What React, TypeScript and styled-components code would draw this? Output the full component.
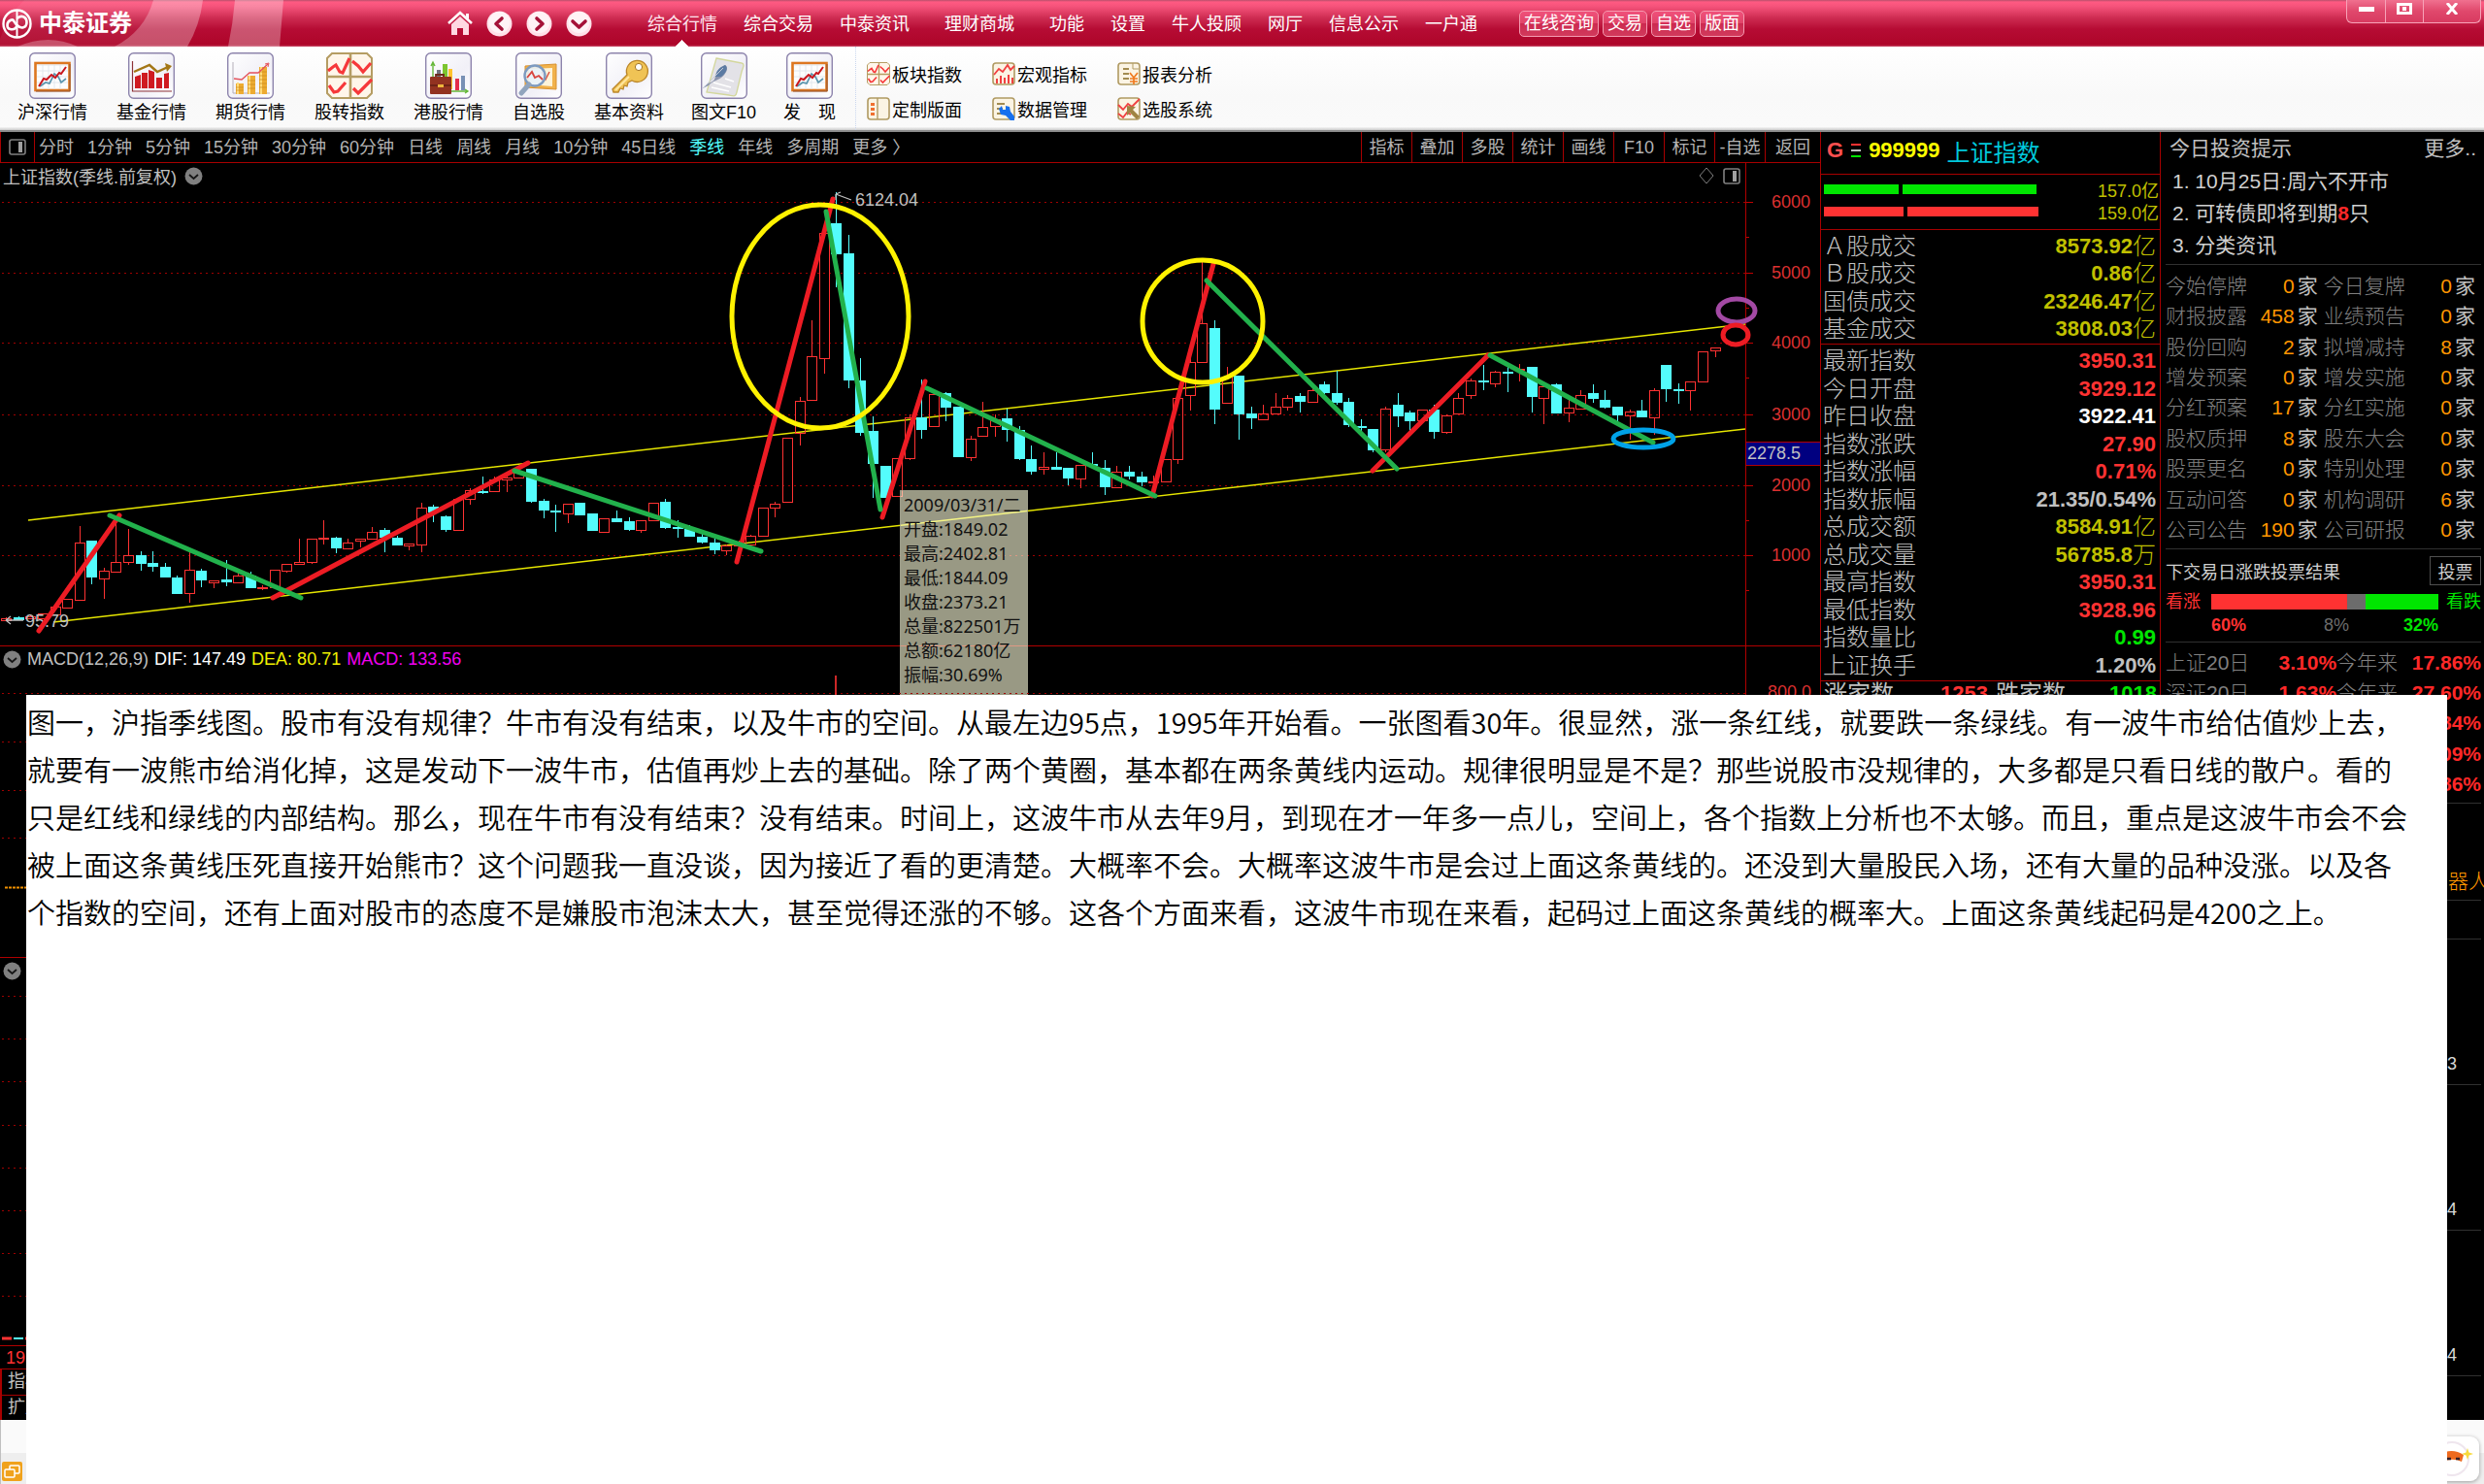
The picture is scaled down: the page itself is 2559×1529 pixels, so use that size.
import React from "react";
import styled, { createGlobalStyle, css } from "styled-components";

const SANS = '"Liberation Sans", "Noto Sans CJK SC", sans-serif';
const RED_LINE = "#a80000";

const GlobalStyle = createGlobalStyle`
  * { box-sizing: border-box; }
  body { margin: 0; background: #fff; font-family: ${SANS}; font-size: 18px; overflow-x: hidden; }
  button, a { font: inherit; color: inherit; text-decoration: none; }
  button { padding: 0; border: 0; background: none; white-space: nowrap; }
  svg { display: block; flex: none; }
`;

/* ---------- page frame ---------- */

const Page = styled.div`
  position: relative;
  display: flex;
  flex-direction: column;
  min-height: 100vh;
  overflow: hidden;
`;

const TitleBar = styled.header`
  position: relative;
  display: flex;
  height: 48px;
  padding-right: 3px;
  color: #fff;
  background: linear-gradient(#b8506c 0, #ff5a82 2px, #f4527a 7px, #cc2a50 19px, #b60c34 30px, #ae0529 46px, #c94b68 48px);
`;

const Swoosh = styled.svg`
  position: absolute;
  left: 0;
  top: 0;
`;

const Brand = styled.div`
  position: relative;
  display: flex;
  align-items: center;
  gap: 7px;
  width: 461px;
  padding-left: 2px;
  font-size: 24px;
  font-weight: 700;
  line-height: 46px;
`;

const NavButtons = styled.div`
  display: flex;
  align-items: center;
  gap: 14px;
  width: 206px;
`;

const IconButton = styled.button`
  display: flex;
`;

const MainNav = styled.nav`
  display: flex;
  gap: 27px;
  line-height: 50px;
`;

const NavLink = styled.a<{ $active?: boolean; $roomy?: boolean }>`
  white-space: nowrap;
  margin-right: ${(p) => (p.$roomy ? "9px" : "0")};
  ${(p) =>
    p.$active &&
    css`
      color: #ffe4ee;
      background: conic-gradient(from 135deg at 50% 0, #fff 90deg, transparent 0) center 41px / 14px 7px no-repeat;
    `}
`;

const QuickLinks = styled.div`
  display: flex;
  flex: 1;
  align-items: center;
  gap: 4px;
  padding-left: 43px;
`;

const QuickButton = styled.button`
  height: 27px;
  padding: 0 4px;
  border: 1px solid #f59ab0;
  border-radius: 5px;
  line-height: 25px;
  background: linear-gradient(#f0507a, #e04468 50%, #cc2a50 50%, #d23a5c);
`;

const WindowControls = styled.div`
  display: flex;
  height: 24px;
  border: 1px solid #f7a3b8;
  border-top: 0;
  border-radius: 0 0 6px 6px;
  background: linear-gradient(#f0708f, #e0486c 50%, #d83a60);
`;

const WindowButton = styled.button<{ $wide?: boolean }>`
  display: flex;
  align-items: center;
  justify-content: center;
  width: ${(p) => (p.$wide ? "59px" : "39px")};
  padding-bottom: 5px;
  & + & { border-left: 1px solid #f7a3b8; }
`;

const ToolBar = styled.div`
  display: flex;
  height: 88px;
  padding-left: 3px;
  border-bottom: 2px solid #8c8c8c;
  background: linear-gradient(#fff, #f9f9f9 60%, #fafafa 96%, #ccc);
`;

const Tool = styled.button`
  display: flex;
  flex-direction: column;
  align-items: center;
  gap: 4px;
  padding: 6px 15px 0;
  line-height: 20px;
  color: #000;
  &:nth-child(8) { padding: 6px 13px 0; }
`;

const SmallTools = styled.div`
  display: grid;
  grid-template-columns: repeat(3, 129px);
  grid-auto-rows: 36px;
  margin-left: 5px;
  padding: 10px 0 0 11px;
  border-left: 1px dotted #c9d6ee;
`;

const SmallTool = styled.button`
  display: flex;
  align-items: center;
  gap: 2px;
  color: #000;
`;

const Workspace = styled.main`
  display: grid;
  flex: 1;
  grid-template-columns: minmax(0, 1fr) 351px 333px;
  color: #c0c0c0;
  background: #000;
`;

/* ---------- chart column ---------- */

const ChartColumn = styled.section`
  display: flex;
  flex-direction: column;
  min-width: 0;
`;

const PeriodBar = styled.div`
  display: flex;
  height: 32px;
  border-bottom: 1px solid ${RED_LINE};
  line-height: 32px;
`;

const PanelToggle = styled.button`
  display: flex;
  align-items: center;
  justify-content: center;
  width: 36px;
  border: solid ${RED_LINE};
  border-width: 0 1px;
`;

const Periods = styled.div`
  display: flex;
  flex: 1;
  gap: 14px;
  padding-left: 4px;
`;

const Period = styled.button<{ $active?: boolean }>`
  color: ${(p) => (p.$active ? "#54fcfc" : "#b4b4b4")};
`;

const ChartAction = styled.button`
  width: 52px;
  border-left: 1px solid ${RED_LINE};
  color: #b4b4b4;
  &:last-child { width: 57px; }
`;

const Pane = styled.div`
  position: relative;
  display: grid;
  > * { grid-area: 1 / 1; }
`;

const PaneTitle = styled.div<{ $gap?: number }>`
  z-index: 1;
  display: flex;
  align-items: center;
  align-self: start;
  gap: ${(p) => p.$gap ?? 8}px;
  height: 26px;
  padding: 0 82px 0 3px;
`;

const Value = styled.span<{ $color: string }>`
  color: ${(p) => p.$color};
`;

const Spacer = styled.span`
  flex: 1;
`;

const ChartSvg = styled.svg`
  width: 100%;
  height: auto;
  font-family: ${SANS};
  font-size: 18px;
`;

const Tooltip = styled.div`
  position: absolute;
  left: 927px;
  top: 337px;
  width: 132px;
  height: 230px;
  padding: 2px 3px;
  border: 1px solid rgba(160, 160, 140, 0.6);
  font-family: "Noto Sans", "Noto Sans CJK SC", sans-serif;
  line-height: 25px;
  color: #111;
  background: rgba(255, 255, 220, 0.6);
  white-space: nowrap;
`;

const TabRow = styled.div`
  flex: 1;
  min-height: 26px;
  padding-left: 6px;
  border: 1px solid ${RED_LINE};
  border-width: 1px 0 0 2px;
  line-height: 25px;
`;

/* ---------- quote column ---------- */

const QuoteColumn = styled.section`
  border: solid ${RED_LINE};
  border-width: 0 1px;
`;

const QuoteHead = styled.div`
  display: flex;
  align-items: center;
  gap: 7px;
  height: 44px;
  padding: 0 6px 5px;
  border-bottom: 1px solid ${RED_LINE};
  font-size: 24px;
  color: #00c8dc;
`;

const Code = styled.strong<{ $color: string }>`
  font-size: 22px;
  color: ${(p) => p.$color};
`;

const Depth = styled.div`
  display: grid;
  grid-template-columns: 224px 1fr;
  grid-auto-rows: 23px;
  align-items: center;
  height: 57px;
  padding: 3px 1px 0 3px;
  border-bottom: 1px solid ${RED_LINE};
  text-align: right;
  color: #c0c000;
`;

const DepthBar = styled.div<{ $color: string }>`
  display: flex;
  gap: 4px;
  height: 10px;
  i { background: ${(p) => p.$color}; }
`;

const Stats = styled.dl<{ $height: number }>`
  display: grid;
  grid-auto-rows: 1fr;
  height: ${(p) => p.$height}px;
  margin: 0;
  padding: 3px 4px 1px 2px;
  border-bottom: 1px solid ${RED_LINE};
`;

const Stat = styled.div`
  display: flex;
  align-items: center;
  justify-content: space-between;
  min-height: 0;
  font-size: 24px;
  line-height: 28px;
`;

const StatLabel = styled.dt`
  font-weight: 300;
`;

const StatValue = styled.dd<{ $color: string }>`
  display: flex;
  margin: 0;
  font-size: 22px;
  font-weight: 700;
  color: ${(p) => p.$color};
  small { font-size: 24px; font-weight: 300; }
`;

const Counts = styled.div`
  display: grid;
  grid-template-columns: 72px 97px 8px 72px 1fr;
  height: 30px;
  padding: 0 3px;
  font-size: 24px;
  line-height: 26px;
  b { font-size: 22px; text-align: right; }
  span:nth-child(3) { grid-column: 4; }
`;

/* ---------- information column ---------- */

const InfoColumn = styled.aside`
  display: flex;
  flex-direction: column;
  padding: 0 3px 0 5px;
  overflow: hidden;
  font-size: 21px;
`;

const InfoHead = styled.div`
  display: flex;
  justify-content: space-between;
  padding: 0 5px 0 4px;
  line-height: 34px;
`;

const Tips = styled.ol`
  height: 102px;
  margin: 0;
  padding: 0 0 0 7px;
  list-style: none;
  line-height: 33px;
  color: #d0d0d0;
`;

const Alert = styled.b`
  color: #ff2828;
`;

const EventTable = styled.table`
  height: 294px;
  border: solid #303030;
  border-width: 1px 0;
  border-spacing: 0;
  padding: 6px 0 3px;
  td, th { padding: 0; font-weight: 400; line-height: 26px; white-space: nowrap; }
  th { width: 85px; text-align: left; color: #808080; font-weight: 300; }
  td { width: 78px; padding-right: 6px; text-align: right; }
`;

const Num = styled.span`
  margin-right: 3px;
  color: #ff9600;
`;

const VoteHead = styled.div`
  display: flex;
  align-items: center;
  justify-content: space-between;
  height: 43px;
  font-size: 18px;
  color: #d0d0d0;
`;

const VoteButton = styled.button`
  width: 53px;
  height: 30px;
  border: 1px solid #505050;
`;

const VoteBar = styled.div`
  display: grid;
  grid-template-columns: 47px 60fr 8fr 32fr 44px;
  height: 52px;
  grid-template-rows: 22px 26px;
  align-items: center;
  font-size: 18px;
  line-height: 22px;
`;

const VoteText = styled.span<{ $color: string; $end?: boolean }>`
  text-align: ${(p) => (p.$end ? "right" : "left")};
  color: ${(p) => p.$color};
`;

const VoteShares = styled.div`
  display: flex;
  grid-row: 2;
  grid-column: 2 / 5;
  justify-content: space-between;
  b:nth-child(2) { margin-left: 24px; font-weight: 400; }
`;

const VoteFill = styled.i<{ $color: string }>`
  height: 16px;
  background: ${(p) => p.$color};
`;

const YearTable = styled.table`
  height: 167px;
  border: solid #303030;
  border-width: 1px 0;
  border-spacing: 0;
  padding: 5px 0 3px;
  td, th { padding: 0; line-height: 26px; white-space: nowrap; }
  th { text-align: left; color: #808080; font-weight: 300; }
  td { text-align: right; color: #ff2828; font-weight: 700; }
  td:nth-child(2) { width: 90px; }
  td:last-child { width: 86px; }
`;

const Topic = styled.div`
  height: 100px;
  padding: 64px 0 0 291px;
  border-bottom: 1px solid #303030;
  font-weight: 300;
  line-height: 32px;
  white-space: nowrap;
  color: #ff9600;
`;

const Gap = styled.div`
  height: 40px;
  border-bottom: 1px solid #303030;
`;

const NewsItem = styled.div`
  height: 150px;
  padding: 116px 25px 0 0;
  border-bottom: 1px solid #303030;
  font-size: 18px;
  line-height: 24px;
  text-align: right;
  color: #d8d8d8;
`;

/* ---------- bottom and note ---------- */

const StatusBar = styled.footer`
  display: flex;
  justify-content: space-between;
  align-items: flex-end;
  height: 66px;
  padding: 0 5px 3px 1px;
  border-left: 1px solid #c0c0c0;
  background: linear-gradient(#fafafa 34px, #eee 34px);
`;

const Assistant = styled.button`
  display: flex;
  align-items: center;
  justify-content: center;
  width: 64px;
  height: 46px;
  padding-left: 10px;
  border-radius: 9px;
  background: #fff;
  box-shadow: 0 1px 4px rgba(0, 0, 0, 0.35);
`;

const Note = styled.article`
  position: absolute;
  inset: 716px 38px 0 27px;
  padding: 3px 0 0 1px;
  font-family: "Noto Sans CJK SC", sans-serif;
  font-size: 29px;
  font-weight: 350;
  line-height: 49px;
  color: #000;
  background: #fff;
  white-space: nowrap;
`;

const NoteLine = styled.div``;

/* ---------- data ---------- */

type Candle = [up: 0 | 1, high: number, top: number, bottom: number, low: number];

// Depth below the top of the price scale, 1039 units for 5000 points.
const candles: Candle[] = [
  [1,1300,1302,1308,1308],[0,1296,1301,1306,1306],[1,1294,1297,1303,1303],[1,1288,1289,1302,1302],[1,1262,1269,1290,1290],
  [1,1247,1247,1270,1270],[1,1031,1080,1248,1248],[0,1074,1074,1180,1202],[1,1155,1164,1187,1246],[1,1010,1136,1167,1167],
  [1,1040,1118,1136,1145],[0,1107,1118,1141,1163],[0,1107,1139,1150,1167],[0,1139,1151,1181,1181],[0,1176,1182,1228,1228],
  [1,1110,1161,1230,1257],[0,1158,1164,1189,1212],[1,1191,1191,1196,1214],[0,1133,1190,1193,1210],[1,1170,1178,1196,1196],
  [0,1165,1178,1211,1211],[1,1205,1212,1213,1220],[1,1161,1161,1212,1212],[1,1144,1144,1162,1168],[1,1070,1137,1144,1144],
  [1,1070,1070,1136,1142],[1,1015,1067,1069,1086],[0,1062,1066,1095,1113],[1,1070,1080,1098,1098],[1,1068,1068,1076,1095],
  [1,1035,1050,1068,1068],[0,1038,1044,1064,1109],[0,1060,1065,1086,1090],[1,1083,1083,1089,1103],[1,964,977,1085,1109],
  [0,970,976,990,1020],[0,1000,1003,1040,1050],[1,951,951,1042,1042],[1,920,926,951,970],[0,886,930,933,938],
  [1,886,895,930,930],[1,885,889,896,933],[1,872,875,888,893],[0,865,865,958,964],[0,953,958,984,1010],
  [0,970,987,990,1048],[1,967,967,994,1022],[0,964,964,997,997],[0,996,996,1043,1043],[1,1010,1010,1048,1052],
  [0,985,1010,1018,1018],[0,1005,1018,1040,1045],[1,1016,1016,1042,1052],[1,963,963,1016,1016],[0,953,962,1035,1040],
  [0,1015,1036,1039,1065],[0,1028,1040,1060,1060],[0,1056,1062,1078,1082],[0,1070,1080,1100,1116],[1,1085,1090,1102,1117],
  [1,1075,1080,1090,1090],[1,1058,1060,1085,1085],[1,977,977,1060,1060],[1,960,965,977,1005],[1,772,772,962,962],
  [1,652,664,758,795],[1,428,532,661,661],[1,165,172,538,585],[0,52,142,230,330],[0,176,232,602,628],
  [0,540,604,755,766],[0,710,753,847,950],[0,856,856,945,945],[1,832,832,944,944],[1,704,712,832,838],
  [0,602,712,748,774],[1,640,645,738,738],[0,638,642,680,724],[0,680,680,826,830],[1,768,776,829,842],
  [1,668,741,768,768],[1,705,717,738,770],[0,688,716,748,783],[0,738,750,833,838],[0,795,835,869,881],
  [1,814,857,865,881],[0,816,858,863,868],[0,860,860,888,911],[1,852,853,891,920],[0,816,850,852,857],
  [0,838,860,915,942],[1,855,872,919,919],[0,856,873,885,895],[0,872,886,902,915],[1,885,902,905,920],
  [1,836,836,902,902],[1,650,657,836,850],[1,540,549,648,692],[1,252,437,550,550],[0,428,449,688,732],
  [1,565,592,670,670],[0,590,591,700,778],[0,680,702,714,748],[1,676,702,717,717],[1,642,682,700,705],
  [1,646,657,682,692],[0,642,651,663,697],[1,628,632,666,670],[0,607,617,638,645],[0,575,640,666,676],
  [0,655,668,732,740],[0,718,737,740,753],[0,748,748,808,816],[1,682,686,806,815],[0,642,677,706,740],
  [0,692,697,722,752],[1,691,691,720,720],[0,675,690,753,774],[1,703,708,756,762],[1,640,657,702,702],
  [1,600,605,648,658],[0,560,604,607,633],[1,575,580,612,623],[0,563,579,582,638],[1,556,570,573,607],
  [0,564,564,650,697],[1,615,622,657,732],[0,612,617,697,697],[1,660,685,698,727],[1,634,647,687,687],
  [0,617,641,657,670],[0,634,660,680,688],[0,680,682,704,730],[1,690,695,708,778],[0,662,694,710,714],
  [1,628,634,713,765],[0,560,560,628,668],[0,612,630,632,672],[1,608,608,632,693],[1,518,520,608,608],[1,507,507,516,535],
];

const depthToY = (d: number) => Math.round(180 + d * 0.3508);
const barX = (i: number) => Math.round(6.3 + i * 12.573);

const redStrokes = [[40,650,123,531],[281,616,544,477],[759,579,858,205],[909,533,953,393],[1187,511,1250,272],[1414,485,1533,366]];
const greenStrokes = [[113,531,310,616],[530,485,784,568],[851,218,907,525],[955,400,1190,511],[1243,289,1439,483],[1535,366,1703,456]];
const priceGrid: [number, string][] = [[208,"6000"],[281,"5000"],[353,"4000"],[427,"3000"],[500,"2000"],[572,"1000"]];

const periods = ["分时","1分钟","5分钟","15分钟","30分钟","60分钟","日线","周线","月线","10分钟","45日线","季线","年线","多周期","更多 〉"];
const actions = ["指标","叠加","多股","统计","画线","F10","标记","-自选","返回"];
const navItems = ["综合行情","综合交易","中泰资讯","理财商城","功能","设置","牛人投顾","网厅","信息公示","一户通"];

const Y = "#c0c000", R = "#ff3232", W = "#ffffff", G = "#00e600", S = "#c0c0c0";
const turnover: [string, string, string, string][] = [
  ["Ａ股成交","8573.92","亿",Y],["Ｂ股成交","0.86","亿",Y],["国债成交","23246.47","亿",Y],["基金成交","3808.03","亿",Y],
];
const quote: [string, string, string, string][] = [
  ["最新指数","3950.31","",R],["今日开盘","3929.12","",R],["昨日收盘","3922.41","",W],["指数涨跌","27.90","",R],
  ["指数涨幅","0.71%","",R],["指数振幅","21.35/0.54%","",S],["总成交额","8584.91","亿",Y],["总成交量","56785.8","万",Y],
  ["最高指数","3950.31","",R],["最低指数","3928.96","",R],["指数量比","0.99","",G],["上证换手","1.20%","",S],
];
const events: [string, number, string, number][] = [
  ["今始停牌",0,"今日复牌",0],["财报披露",458,"业绩预告",0],["股份回购",2,"拟增减持",8],["增发预案",0,"增发实施",0],
  ["分红预案",17,"分红实施",0],["股权质押",8,"股东大会",0],["股票更名",0,"特别处理",0],["互动问答",0,"机构调研",6],["公司公告",190,"公司研报",0],
];
const noteLines = [
  "图一，沪指季线图。股市有没有规律？牛市有没有结束，以及牛市的空间。从最左边95点，1995年开始看。一张图看30年。很显然，涨一条红线，就要跌一条绿线。有一波牛市给估值炒上去，",
  "就要有一波熊市给消化掉，这是发动下一波牛市，估值再炒上去的基础。除了两个黄圈，基本都在两条黄线内运动。规律很明显是不是？那些说股市没规律的，大多都是只看日线的散户。看的",
  "只是红线和绿线的内部结构。那么，现在牛市有没有结束？没有结束。时间上，这波牛市从去年9月，到现在才一年多一点儿，空间上，各个指数上分析也不太够。而且，重点是这波牛市会不会",
  "被上面这条黄线压死直接开始熊市？这个问题我一直没谈，因为接近了看的更清楚。大概率不会。大概率这波牛市是会过上面这条黄线的。还没到大量股民入场，还有大量的品种没涨。以及各",
  "个指数的空间，还有上面对股市的态度不是嫌股市泡沫太大，甚至觉得还涨的不够。这各个方面来看，这波牛市现在来看，起码过上面这条黄线的概率大。上面这条黄线起码是4200之上。",
];

/* ---------- icons ---------- */

const Frame = ({ children }: { children: React.ReactNode }) => (
  <svg width="48" height="48" viewBox="0 0 48 48" fill="none">
    <defs>
      <linearGradient id="tile" x1="0" y1="0" x2="1" y2="1">
        <stop offset="0" stopColor="#fff" />
        <stop offset="0.6" stopColor="#f1f0f7" />
        <stop offset="1" stopColor="#fff" />
      </linearGradient>
    </defs>
    <rect x="0.7" y="0.7" width="46.6" height="46.6" rx="5" fill="url(#tile)" stroke="#8d84ac" strokeWidth="1.4" />
    {children}
  </svg>
);

const BoardIcon = () => (
  <Frame>
    <rect x="6.5" y="11" width="35" height="28" fill="#fdfdfd" stroke="#dd7720" strokeWidth="2.6" />
    <path d="M8 13h32M14 13v25M20 13v25M26 13v25M32 13v25M8 19h32M8 25h32M8 31h32" stroke="#dde3ea" strokeWidth="0.8" />
    <path d="M11 35l6-4 4 1 5-10 4 3 3 6 5-4" stroke="#5b95ad" strokeWidth="1.7" />
    <path d="M10 35l5-8 3 1 5-5 4 3 4-5 2 1 5-7" stroke="#c9161d" strokeWidth="2" />
    <path d="M7 40h35V12" stroke="#8d5332" />
  </Frame>
);

const FundIcon = () => (
  <Frame>
    <path d="M4.5 9v31H45" stroke="#8d3339" strokeWidth="1.2" />
    <path d="M7 25l6-2v14H7zM14 21h6v16h-6zM21 18l6 2v17h-6zM29 26h6v11h-6zM37 22l5-1v16h-5z" fill="#cf1a20" />
    <path d="M6 20l16-7 8 7 11-5" stroke="#a37616" strokeWidth="2.4" />
    <path d="M38 11l7 3-5 6z" fill="#a37616" />
  </Frame>
);

const FutureIcon = () => (
  <Frame>
    <path d="M6 10v32h38" stroke="#b4aeb9" />
    <path d="M9 32h8v11H9zM21 24h8v19h-8zM33 15h8v28h-8z" fill="#edab32" />
    <path d="M11 31v12M23 24v19M35 15v28" stroke="#ffdc7e" strokeWidth="2" />
    <path d="M9 36h8M9 39h8M21 29h8M21 33h8M21 37h8M33 20h8M33 24h8M33 28h8M33 32h8M33 36h8" stroke="#c98b1d" strokeWidth="0.7" />
    <path d="M7 27l8 1 8-7h9l10-9" stroke="#e4525c" strokeWidth="1.4" />
    <path d="M39 12l4-1-1 4" stroke="#e4525c" />
  </Frame>
);

const QuadArt = () => (
  <>
    <path d="M6 1h36l5 5v36l-5 5H6l-5-5V6z" fill="#fff6ea" stroke="#b59d63" strokeWidth="2" />
    <path d="M25 1v46M1 25h46" stroke="#b59d63" strokeWidth="2.6" />
    <path d="M2 19l5-4 3-2 4 7 3 1 7-15M27 9l6 5 5 6 8-9M3 34l5 7 4-1 8-9M28 37l5 5 6-6 8-8" stroke="#f6383a" strokeWidth="3.2" />
  </>
);
const QuadIcon = () => <svg width="48" height="48" viewBox="0 0 48 48" fill="none"><QuadArt /></svg>;

const HkIcon = () => (
  <Frame>
    <path d="M8 27V10m-2 4l2-4 2 4M20 40h24m-3-2l3 2-3 2" stroke="#66b83a" strokeWidth="1.4" />
    <path d="M12 18h4v8h-4z" fill="#71707c" /><path d="M18 12h5v14h-5z" fill="#7cc52f" /><path d="M24 17h4v21h-4z" fill="#ffc32c" />
    <path d="M31 27h4v12h-4z" fill="#e42c4b" /><path d="M37 24h4v15h-4z" fill="#7890b4" />
    <path d="M11 25v-2h8v2" stroke="#6e281b" strokeWidth="1.8" />
    <rect x="5" y="25" width="22" height="18" rx="1" fill="#923220" /><path d="M5 34h22" stroke="#5e1d13" strokeWidth="1.4" />
    <rect x="13" y="33" width="6" height="3" fill="#eeb63c" />
  </Frame>
);

const LensIcon = () => (
  <Frame>
    <path d="M10 14l32-2v26l-32-2z" fill="#f1b24b" stroke="#d9912e" />
    <path d="M14 17l24-1v19l-24-2z" fill="#fdf3d9" />
    <path d="M27 20l4 8 4-8" stroke="#da4c3c" strokeWidth="1.4" />
    <circle cx="20" cy="24" r="10.5" fill="#e7f1fa" fillOpacity="0.88" stroke="#7d9ac0" strokeWidth="2.4" />
    <path d="M12 26l5-6 3 6 4-2 4 4" stroke="#d8453e" strokeWidth="1.8" />
    <path d="M14 33l-8 9" stroke="#91a4bd" strokeWidth="5" strokeLinecap="round" />
  </Frame>
);

const KeyIcon = () => (
  <Frame>
    <path d="M22 23L7 38l1 3h5l2-4 3 1 1-4 3 1 1-4 4-2a11 11 0 1 0-5-6z" fill="#f0c355" stroke="#bb862a" strokeWidth="1.3" />
    <path d="M24 25L10 39" stroke="#ffe69e" strokeWidth="2" />
    <circle cx="34" cy="15" r="3.6" fill="#fff" stroke="#a47624" />
  </Frame>
);

const PaperIcon = () => (
  <Frame>
    <path d="M16 6l26 5c4 1 1 5 0 9l-5 21c-1 5-3 4-8 3L6 41z" fill="#e3e2e7" stroke="#d3d79c" strokeWidth="1.3" />
    <path d="M13 31l18 5M11 36l18 4M25 27l9 3" stroke="#fff" strokeWidth="1.4" />
    <path d="M2 37c4-6 9-5 12-9 2-5 2-11 11-15 5 3 0 10-4 13-4 3-8 3-13 8z" fill="#8c95ae" />
    <path d="M15 25c1-6 3-9 10-12 4 3 0 9-4 12z" fill="#5c7ba3" />
    <path d="M2 37L23 16" stroke="#c6ccd8" />
  </Frame>
);

const SmallSheet = ({ children }: { children: React.ReactNode }) => (
  <svg width="24" height="24" viewBox="0 0 24 24" fill="none">
    <rect x="1" y="1" width="22" height="22" rx="3" fill="#fbf4e4" stroke="#b09a62" strokeWidth="1.6" />
    {children}
  </svg>
);

const smallTools: [string, React.ReactNode][] = [
  ["板块指数", <svg key="q" width="24" height="24" viewBox="0 0 48 48" fill="none"><QuadArt /></svg>],
  ["宏观指标", <SmallSheet key="m"><path d="M2 13l5-6 4 3 5-7 3 5 4-4" stroke="#f04040" strokeWidth="1.8" /><path d="M5 22v-5M9 22v-8M13 22v-6M17 22v-9M21 22v-6" stroke="#f04040" strokeWidth="2" /></SmallSheet>],
  ["报表分析", <SmallSheet key="r"><path d="M6 7h6M6 12h6M6 17h6" stroke="#a28b50" strokeWidth="1.8" /><path d="M16 1v6h6" stroke="#b09a62" /><path d="M13 11l4 5 4-5M17 16v7M13 17h8M13 20h8" stroke="#f07a20" strokeWidth="1.7" /></SmallSheet>],
  ["定制版面", <SmallSheet key="c"><path d="M11 1v22" stroke="#b09a62" strokeWidth="1.4" /><path d="M4 6h4v3H4zM4 11h4v3H4zM4 16h4v3H4z" fill="#f07030" /></SmallSheet>],
  ["数据管理", <SmallSheet key="d"><path d="M5 7h8M5 12h6M5 17h4" stroke="#a28b50" strokeWidth="1.8" /><path d="M7 12l3-3 1 4 3 0 0-4 4 1 1 5 4 5v4h-4l-5-5-5-1z" fill="#1670ee" /></SmallSheet>],
  ["选股系统", <SmallSheet key="s"><path d="M1 8l5 5 5-6 4 3 8-8M1 17l5 4 4-5 4 2" stroke="#f04040" strokeWidth="1.8" /><path d="M10 9l9 1-3 3 7 7-3 3-7-7-3 3z" fill="#a08442" /></SmallSheet>],
];

const bigTools: [string, () => React.ReactElement][] = [
  ["沪深行情", BoardIcon],["基金行情", FundIcon],["期货行情", FutureIcon],["股转指数", QuadIcon],["港股行情", HkIcon],
  ["自选股", LensIcon],["基本资料", KeyIcon],["图文F10", PaperIcon],["发　现", BoardIcon],
];

const RoundArrow = ({ d }: { d: string }) => (
  <svg width="27" height="27" viewBox="0 0 27 27">
    <circle cx="13.5" cy="13.5" r="13" fill="#ffe0e8" />
    <circle cx="13.5" cy="12" r="11" fill="#fff3f6" />
    <path d={d} fill="none" stroke="#a51238" strokeWidth="3.6" strokeLinejoin="round" strokeLinecap="round" />
  </svg>
);

const DropDot = () => (
  <svg width="19" height="19" viewBox="0 0 19 19">
    <circle cx="9.5" cy="9.5" r="9" fill="#808080" />
    <path d="M5 8l4.5 4 4.5-4" fill="none" stroke="#151515" strokeWidth="1.8" />
  </svg>
);

const SidePanelIcon = () => (
  <svg width="18" height="17" viewBox="0 0 18 17" fill="none">
    <rect x="1" y="1" width="16" height="15" rx="2" stroke="#808080" strokeWidth="1.6" />
    <path d="M10 3h4v11h-4z" fill="#a0a0a0" />
  </svg>
);

/* ---------- charts ---------- */

const dots = { stroke: "#a00000", strokeDasharray: "2 4", shapeRendering: "crispEdges" as const };

const PriceChart = () => (
  <ChartSvg viewBox="0 168 1875 498" role="img" aria-label="上证指数季线">
    {priceGrid.map(([y, label]) => (
      <g key={label}>
        <path d={`M2 ${y}.5H1799`} {...dots} />
        <path d={`M1799 ${y}.5h7M1799 ${y + 36}.5h3`} stroke="#c00000" />
        <text x="1825" y={y + 6} fill="#dc3030">{label}</text>
      </g>
    ))}
    <path d="M1798.5 168V666M0 665.5H1875" stroke="#b00000" />
    <path d="M29 536L1798 334M55 641L1798 442" stroke="#e6e600" strokeWidth="1.4" />
    <g shapeRendering="crispEdges">
      {candles.map(([up, high, top, bottom, low], i) => {
        const x = barX(i);
        const t = depthToY(top);
        const b = Math.max(depthToY(bottom), t + 1);
        const color = up ? "#ff3232" : "#54fcfc";
        return (
          <g key={i} stroke={color} strokeWidth="1">
            <path d={`M${x + 0.5} ${depthToY(high)}V${t}M${x + 0.5} ${b}V${depthToY(low)}`} />
            <rect x={x - 4.5} y={t + 0.5} width="10" height={b - t} fill={up ? "none" : color} />
          </g>
        );
      })}
    </g>
    <g fill="#c0c0c0" stroke="none">
      <text x="26" y="646">95.79</text>
      <text x="881" y="212">6124.04</text>
    </g>
    <path d="M6 639h18M6 639l5-4M6 639l5 4M861 200l16 6M861 200v6M861 200l5-2" stroke="#c0c0c0" fill="none" strokeWidth="1.3" />
    <g strokeWidth="5" strokeLinecap="round">
      {redStrokes.map(([a, b, c, d]) => <path key={a} d={`M${a} ${b}L${c} ${d}`} stroke="#ed1c24" />)}
      {greenStrokes.map(([a, b, c, d]) => <path key={a} d={`M${a} ${b}L${c} ${d}`} stroke="#22b14c" />)}
    </g>
    <g fill="none" strokeWidth="5">
      <ellipse cx="845" cy="326" rx="91" ry="115" stroke="#fff200" />
      <ellipse cx="1239" cy="331" rx="62" ry="63" stroke="#fff200" />
      <ellipse cx="1789" cy="320" rx="19" ry="12" stroke="#a349a4" />
      <ellipse cx="1788" cy="345" rx="13" ry="10" stroke="#ed1c24" />
      <ellipse cx="1693" cy="452" rx="31" ry="9" stroke="#00a2e8" />
    </g>
    <rect x="1798.5" y="455.5" width="80" height="24" fill="#000080" stroke="#b00000" />
    <text x="1800" y="473" fill="#c0c0c0">2278.5</text>
  </ChartSvg>
);

const MacdChart = () => (
  <ChartSvg viewBox="0 666 1875 321" aria-hidden="true">
    {[714, 764, 814, 863].map((y) => <path key={y} d={`M2 ${y}.5H1799`} {...dots} />)}
    <path d="M5 914.5H1799" stroke="#f09000" strokeWidth="2" strokeDasharray="3 1" />
    <path d="M861 696v100" stroke="#ff3232" strokeWidth="1.6" />
    <path d="M1798.5 666V987M0 986.5H1875" stroke="#b00000" />
    <text x="1821" y="719" fill="#dc3030">800.0</text>
  </ChartSvg>
);

const VolumeChart = () => (
  <ChartSvg viewBox="0 987 1875 423" aria-hidden="true">
    {[1026, 1070, 1114, 1159, 1203, 1247, 1291, 1335].map((y) => <path key={y} d={`M2 ${y}.5H1799`} {...dots} />)}
    <path d="M2 1379h10M26 1379h10" stroke="#ff3232" strokeWidth="3" />
    <path d="M14 1379h10" stroke="#54fcfc" strokeWidth="2" />
    <path d="M0 1386.5H1875" stroke="#b00000" />
    <text x="6" y="1405" fill="#ff3232">19</text>
  </ChartSvg>
);

const StatList = ({ rows, height }: { rows: [string, string, string, string][]; height: number }) => (
  <Stats $height={height}>
    {rows.map(([label, value, unit, color]) => (
      <Stat key={label}>
        <StatLabel>{label}</StatLabel>
        <StatValue $color={color}>{value}{unit && <small>{unit}</small>}</StatValue>
      </Stat>
    ))}
  </Stats>
);

export default function App() {
  return (
    <Page>
      <GlobalStyle />
      <TitleBar>
        <Swoosh width="300" height="48" viewBox="0 0 300 48" aria-hidden="true">
          <path d="M25 0H158Q149 32 118 48H80Q50 34 18 48H0V40Q8 16 25 0z" fill="#fff" opacity="0.06" />
          <path d="M158 0H209Q206 26 193 48H118Q149 32 158 0zM242 0H292L288 48H235Q240 24 242 0zM18 48Q50 34 80 48z" fill="#fff" opacity="0.3" />
        </Swoosh>
        <Brand>
          <svg width="31" height="31" viewBox="0 0 31 31" fill="none" stroke="#fff" aria-hidden="true">
            <circle cx="15.5" cy="15.5" r="14" strokeWidth="2.4" />
            <path d="M15.5 1v29" strokeWidth="2" />
            <path d="M15.5 10c4-4 10-2 10 4s-6 7-10 3-3-7-7-5-4 8 0 9 7-1 7-5" strokeWidth="2.6" />
          </svg>
          中泰证券
        </Brand>
        <NavButtons>
          <IconButton aria-label="首页">
            <svg width="26" height="26" viewBox="0 0 26 26">
              <path d="M4 14l9-8 9 8v11h-6v-7h-6v7H4z" fill="#ffd9e2" />
              <path d="M1 13L13 2l12 11" fill="none" stroke="#fff" strokeWidth="2.6" />
              <path d="M19 3h3v6l-3-3z" fill="#fff" />
            </svg>
          </IconButton>
          <IconButton aria-label="后退"><RoundArrow d="M16 8l-6 5.5 6 5.5" /></IconButton>
          <IconButton aria-label="前进"><RoundArrow d="M11 8l6 5.5-6 5.5" /></IconButton>
          <IconButton aria-label="展开"><RoundArrow d="M7 11l6.5 6 6.5-6" /></IconButton>
        </NavButtons>
        <MainNav>
          {navItems.map((t, i) => <NavLink href="#" key={t} $active={i === 0} $roomy={i === 2 || i === 3}>{t}</NavLink>)}
        </MainNav>
        <QuickLinks>
          {["在线咨询", "交易", "自选", "版面"].map((t) => <QuickButton key={t}>{t}</QuickButton>)}
        </QuickLinks>
        <WindowControls>
          <WindowButton aria-label="最小化"><svg width="16" height="5"><rect width="16" height="5" fill="#fff" /></svg></WindowButton>
          <WindowButton aria-label="还原"><svg width="16" height="12" fill="none" stroke="#fff"><rect x="1.5" y="1.5" width="13" height="9" strokeWidth="3" /><rect x="6" y="4" width="4" height="4" fill="#fff" stroke="none" /></svg></WindowButton>
          <WindowButton aria-label="关闭" $wide><svg width="14" height="12" stroke="#fff" strokeWidth="3"><path d="M2 0l10 12M12 0L2 12" /></svg></WindowButton>
        </WindowControls>
      </TitleBar>

      <ToolBar>
        {bigTools.map(([t, Icon]) => <Tool key={t}><Icon />{t}</Tool>)}
        <SmallTools>
          {smallTools.map(([t, icon]) => <SmallTool key={t}>{icon}{t}</SmallTool>)}
        </SmallTools>
      </ToolBar>

      <Workspace>
        <ChartColumn>
          <PeriodBar>
            <PanelToggle aria-label="侧栏"><SidePanelIcon /></PanelToggle>
            <Periods>{periods.map((t) => <Period key={t} $active={t === "季线"}>{t}</Period>)}</Periods>
            {actions.map((t) => <ChartAction key={t}>{t}</ChartAction>)}
          </PeriodBar>
          <Pane>
            <PaneTitle>
              <span>上证指数(季线.前复权)</span>
              <DropDot />
              <Spacer />
              <svg width="18" height="18" viewBox="0 0 18 18" fill="none" stroke="#808080"><path d="M9 1l7 8-7 8-7-8z" /></svg>
              <SidePanelIcon />
            </PaneTitle>
            <PriceChart />
            <Tooltip role="tooltip">
              2009/03/31/二<br />开盘:1849.02<br />最高:2402.81<br />最低:1844.09<br />收盘:2373.21<br />总量:822501万<br />总额:62180亿<br />振幅:30.69%
            </Tooltip>
          </Pane>
          <Pane>
            <PaneTitle $gap={6}>
              <DropDot />
              <span>MACD(12,26,9)</span>
              <Value $color="#fff">DIF: 147.49</Value>
              <Value $color="#f0f000">DEA: 80.71</Value>
              <Value $color="#f000f0">MACD: 133.56</Value>
            </PaneTitle>
            <MacdChart />
          </Pane>
          <Pane>
            <PaneTitle><DropDot /></PaneTitle>
            <VolumeChart />
          </Pane>
          <TabRow>指标</TabRow>
          <TabRow>扩展</TabRow>
        </ChartColumn>

        <QuoteColumn>
          <QuoteHead>
            <Code $color="#ff5050">G</Code>
            <svg width="12" height="16" viewBox="0 0 12 16" strokeWidth="2"><path d="M1 2h10" stroke="#ff3232" /><path d="M1 8h10" stroke="#c0c0c0" /><path d="M1 14h10" stroke="#00e600" /></svg>
            <Code $color="#ffff00">999999</Code>
            上证指数
          </QuoteHead>
          <Depth>
            <DepthBar $color="#00e600"><i style={{ width: 77 }} /><i style={{ width: 138 }} /></DepthBar>157.0亿
            <DepthBar $color="#ff3232"><i style={{ width: 82 }} /><i style={{ width: 135 }} /></DepthBar>159.0亿
          </Depth>
          <StatList rows={turnover} height={118} />
          <StatList rows={quote} height={347} />
          <Counts>
            <span>涨家数</span><Value as="b" $color={R}>1253</Value>
            <span>跌家数</span><Value as="b" $color={G}>1018</Value>
          </Counts>
        </QuoteColumn>

        <InfoColumn>
          <InfoHead><span>今日投资提示</span><a href="#">更多..</a></InfoHead>
          <Tips>
            <li>1. 10月25日:周六不开市</li>
            <li>2. 可转债即将到期<Alert>8</Alert>只</li>
            <li>3. 分类资讯</li>
          </Tips>
          <EventTable>
            <tbody>
              {events.map(([a, n, b, m]) => (
                <tr key={a}>
                  <th scope="row">{a}</th><td><Num>{n}</Num>家</td>
                  <th scope="row">{b}</th><td><Num>{m}</Num>家</td>
                </tr>
              ))}
            </tbody>
          </EventTable>
          <VoteHead><span>下交易日涨跌投票结果</span><VoteButton>投票</VoteButton></VoteHead>
          <VoteBar>
            <VoteText $color={R}>看涨</VoteText>
            <VoteFill $color={R} /><VoteFill $color="#6c6c6c" /><VoteFill $color={G} />
            <VoteText $color={G} $end>看跌</VoteText>
            <VoteShares>
              <Value as="b" $color={R}>60%</Value>
              <Value as="b" $color="#6c6c6c">8%</Value>
              <Value as="b" $color={G}>32%</Value>
            </VoteShares>
          </VoteBar>
          <YearTable>
            <tbody>
              <tr><th scope="row">上证20日</th><td>3.10%</td><th scope="row">今年来</th><td>17.86%</td></tr>
              <tr><th scope="row">深证20日</th><td>1.63%</td><th scope="row">今年来</th><td>27.60%</td></tr>
              <tr><td colSpan={4}>84%</td></tr>
              <tr><td colSpan={4}>09%</td></tr>
              <tr><td colSpan={4}>86%</td></tr>
            </tbody>
          </YearTable>
          <Topic>器人</Topic>
          <Gap />
          <NewsItem>23</NewsItem>
          <NewsItem>24</NewsItem>
          <NewsItem>24</NewsItem>
        </InfoColumn>
      </Workspace>

      <StatusBar>
        <svg width="21" height="20" viewBox="0 0 21 20" fill="none" stroke="#fff">
          <rect width="21" height="20" rx="2" fill="#f0a21c" stroke="none" />
          <rect x="8" y="4" width="10" height="8" rx="1" strokeWidth="1.5" />
          <rect x="3" y="8" width="10" height="8" rx="1" fill="#f0a21c" strokeWidth="1.5" />
        </svg>
        <Assistant aria-label="助手">
          <svg width="46" height="40" viewBox="0 0 46 40" fill="none">
            <circle cx="22" cy="20" r="17" fill="#fff" stroke="#efe6ee" strokeWidth="2" />
            <path d="M8 16q14-8 26 0l-2 7q-10-5-22 1z" fill="#ee6a1e" />
            <path d="M14 20h7M26 20h4" stroke="#33202a" strokeWidth="2.5" />
            <path d="M38 9l1.5 4.5L44 15l-4.5 1.5L38 21l-1.5-4.5L32 15l4.5-1.5z" fill="#f7da3c" />
          </svg>
        </Assistant>
      </StatusBar>

      <Note>{noteLines.map((line) => <NoteLine key={line}>{line}</NoteLine>)}</Note>
    </Page>
  );
}
